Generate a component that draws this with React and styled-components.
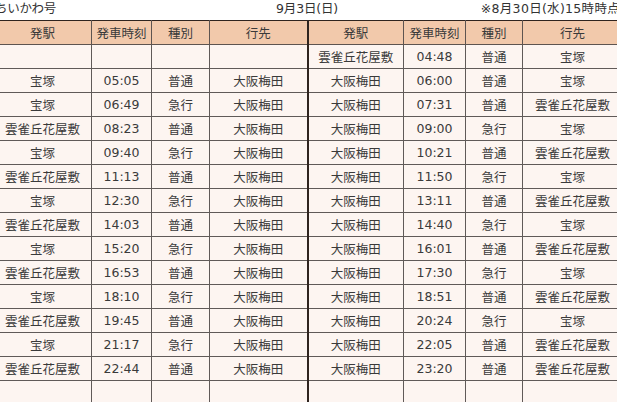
import styled, { createGlobalStyle } from 'styled-components';

const GlobalStyle = createGlobalStyle`
  html, body {
    margin: 0;
    padding: 0;
    background: #ffffff;
    overflow: hidden;
  }
  body {
    font-family: "DejaVu Sans", "Noto Sans CJK JP", sans-serif;
    color: #3a3a3a;
  }
`;

const LEFT = [
  ['', '', '', ''],
  ['宝塚', '05:05', '普通', '大阪梅田'],
  ['宝塚', '06:49', '急行', '大阪梅田'],
  ['雲雀丘花屋敷', '08:23', '普通', '大阪梅田'],
  ['宝塚', '09:40', '急行', '大阪梅田'],
  ['雲雀丘花屋敷', '11:13', '普通', '大阪梅田'],
  ['宝塚', '12:30', '急行', '大阪梅田'],
  ['雲雀丘花屋敷', '14:03', '普通', '大阪梅田'],
  ['宝塚', '15:20', '急行', '大阪梅田'],
  ['雲雀丘花屋敷', '16:53', '普通', '大阪梅田'],
  ['宝塚', '18:10', '急行', '大阪梅田'],
  ['雲雀丘花屋敷', '19:45', '普通', '大阪梅田'],
  ['宝塚', '21:17', '急行', '大阪梅田'],
  ['雲雀丘花屋敷', '22:44', '普通', '大阪梅田'],
  ['', '', '', ''],
];

const RIGHT = [
  ['雲雀丘花屋敷', '04:48', '普通', '宝塚'],
  ['大阪梅田', '06:00', '普通', '宝塚'],
  ['大阪梅田', '07:31', '普通', '雲雀丘花屋敷'],
  ['大阪梅田', '09:00', '急行', '宝塚'],
  ['大阪梅田', '10:21', '普通', '雲雀丘花屋敷'],
  ['大阪梅田', '11:50', '急行', '宝塚'],
  ['大阪梅田', '13:11', '普通', '雲雀丘花屋敷'],
  ['大阪梅田', '14:40', '急行', '宝塚'],
  ['大阪梅田', '16:01', '普通', '雲雀丘花屋敷'],
  ['大阪梅田', '17:30', '急行', '宝塚'],
  ['大阪梅田', '18:51', '普通', '雲雀丘花屋敷'],
  ['大阪梅田', '20:24', '急行', '宝塚'],
  ['大阪梅田', '22:05', '普通', '雲雀丘花屋敷'],
  ['大阪梅田', '23:20', '普通', '雲雀丘花屋敷'],
  ['', '', '', ''],
];

const HEAD = ['発駅', '発車時刻', '種別', '行先'];
const WIDTHS = [98, 60, 58, 98, 96, 62, 57, 100];

export default function App() {
  return (
    <>
      <GlobalStyle />
      <Page>
        <TitleBar>
          <Name>ちいかわ号</Name>
          <DateText>9月3日(日)</DateText>
          <Note>※8月30日(水)15時時点</Note>
        </TitleBar>
        <Table>
          <colgroup>
            {WIDTHS.map((w, i) => (
              <col key={i} style={{ width: w }} />
            ))}
          </colgroup>
          <thead>
            <tr>
              {[...HEAD, ...HEAD].map((h, i) => (
                <HeadCell key={i} $split={i === 3}>
                  {h}
                </HeadCell>
              ))}
            </tr>
          </thead>
          <tbody>
            {LEFT.map((row, r) => (
              <tr key={r}>
                {[...row, ...RIGHT[r]].map((v, i) => (
                  <Cell key={i} $split={i === 3}>
                    {v}
                  </Cell>
                ))}
              </tr>
            ))}
          </tbody>
        </Table>
      </Page>
    </>
  );
}

const Page = styled.div`
  width: 628px;
  margin-left: -7px;
`;

const TitleBar = styled.div`
  display: grid;
  grid-template-columns: 1fr auto 1fr;
  align-items: center;
  height: 19px;
  font-size: 12.5px;
  line-height: 1;
  padding-bottom: 1px;
  color: #333;
`;

const Name = styled.div`
  padding-left: 2px;
  letter-spacing: -0.3px;
`;

const DateText = styled.div`
  letter-spacing: -0.2px;
`;

const Note = styled.div`
  justify-self: end;
  white-space: nowrap;
  letter-spacing: 0.3px;
  margin-right: 1px;
`;

const Table = styled.table`
  table-layout: fixed;
  border-collapse: collapse;
  width: 628px;
  border-top: 1px solid #2f241f;
  font-size: 12.5px;
`;

const HeadCell = styled.th`
  height: 23px;
  padding: 0;
  font-weight: normal;
  text-align: center;
  background: #f2c9ab;
  border: 1px solid #5e5450;
  border-top: 1px solid #2f241f;
  border-right: ${(p) => (p.$split ? '2px solid #2f241f' : '1px solid #5e5450')};
  color: #3a3a3a;
  white-space: nowrap;
  overflow: hidden;
`;

const Cell = styled.td`
  height: 23px;
  padding: 0;
  text-align: center;
  background: #fdf5f1;
  border: 1px solid #605a58;
  border-right: ${(p) => (p.$split ? '2px solid #2f241f' : '1px solid #605a58')};
  white-space: nowrap;
  overflow: hidden;
  color: #3a3a3a;
`;
